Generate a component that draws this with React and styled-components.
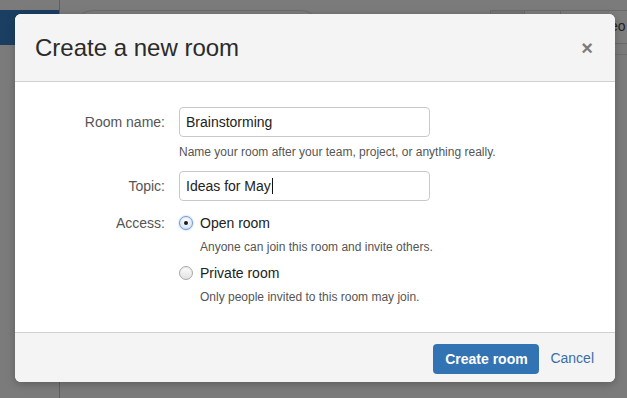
import React from "react";
import styled, { createGlobalStyle } from "styled-components";

const Global = createGlobalStyle`
  html, body { margin: 0; padding: 0; }
  body {
    width: 627px;
    height: 398px;
    overflow: hidden;
    background: #7b7b7b;
    font-family: "Liberation Sans", Arial, sans-serif;
  }
`;

const Page = styled.div`
  position: relative;
  display: flex;
  width: 627px;
  height: 398px;
  background: #7b7b7b;
`;

const Sidebar = styled.div`
  width: 59px;
  border-right: 1px solid #5f5f5f;
  padding-top: 10px;
`;

const BlueTab = styled.div`
  height: 35px;
  background: #1b3f62;
`;

const Main = styled.div`
  flex: 1;
  display: flex;
  flex-direction: column;
`;

const Toolbar = styled.div`
  display: flex;
  align-items: flex-start;
  padding: 10px 0 0 16px;
  height: 44px;
  border-bottom: 1px solid #6e6e6e;
`;

const Search = styled.div`
  width: 240px;
  height: 30px;
  border: 1px solid #6c6c6c;
  border-radius: 16px;
  background: #7d7d7d;
`;

const ToolGroup = styled.div`
  display: flex;
  margin-left: auto;
`;

const ToolBtn = styled.div`
  width: ${p => p.w}px;
  height: 34px;
  border: 1px solid #6a6a6a;
  border-right: none;
  background: ${p => (p.dark ? "#747474" : "#7d7d7d")};
  font-size: 14px;
  color: #222;
  line-height: 30px;
  padding-left: ${p => p.pad || 0}px;
  box-sizing: border-box;
  overflow: hidden;
  white-space: nowrap;
`;

const Overlay = styled.div`
  position: absolute;
  inset: 0;
  padding: 14px 0 0 15px;
`;

const Modal = styled.div`
  width: 600px;
  border-radius: 6px;
  overflow: hidden;
  background: #fff;
  box-shadow: 0 2px 8px rgba(0, 0, 0, 0.25);
`;

const Header = styled.div`
  display: flex;
  align-items: center;
  justify-content: space-between;
  height: 67px;
  padding: 0 22px 0 20px;
  background: #f4f4f4;
  border-bottom: 1px solid #d0d0d0;
`;

const Title = styled.h3`
  margin: 0;
  font-size: 24px;
  font-weight: normal;
  color: #2b2b2b;
  padding-top: 1px;
`;

const Close = styled.span`
  font-size: 20px;
  font-weight: bold;
  color: #7c7c7c;
  line-height: 1;
  margin-top: 1px;
`;

const Body = styled.div`
  display: grid;
  grid-template-columns: 150px 1fr;
  column-gap: 14px;
  padding: 25px 0 27px;
`;

const Label = styled.div`
  text-align: right;
  font-size: 14px;
  color: #555;
  line-height: ${p => p.lh || 30}px;
  margin-top: ${p => p.mt || 0}px;
`;

const Field = styled.div`
  margin-top: ${p => p.mt || 0}px;
`;

const Input = styled.div`
  width: 251px;
  height: 30px;
  box-sizing: border-box;
  border: 1px solid #c9c9c9;
  border-radius: 4px;
  padding: 0 6px;
  font-size: 14px;
  line-height: 28px;
  color: #222;
  display: flex;
  align-items: center;
`;

const Caret = styled.span`
  display: inline-block;
  width: 1px;
  height: 16px;
  background: #111;
  margin-left: 1px;
`;

const Help = styled.div`
  font-size: 12px;
  color: #555;
  line-height: 16px;
  margin-top: ${p => p.mt || 0}px;
  padding-left: ${p => p.indent || 0}px;
`;

const Option = styled.div`
  display: flex;
  align-items: center;
  height: 20px;
  margin-top: ${p => p.mt || 0}px;
  font-size: 14px;
  color: #222;
`;

const Radio = styled.span`
  box-sizing: border-box;
  width: 14px;
  height: 14px;
  border-radius: 50%;
  margin-right: 7px;
  display: inline-flex;
  align-items: center;
  justify-content: center;
  border: 1px solid ${p => (p.checked ? "#6f9bd0" : "#a9a9a9")};
  background: ${p =>
    p.checked
      ? "radial-gradient(circle at 50% 35%, #fff 0%, #dfeaf7 60%, #b9cfea 100%)"
      : "linear-gradient(#fdfdfd, #e2e2e2)"};
  box-shadow: ${p => (p.checked ? "0 0 2px #8fb3e0" : "inset 0 1px 1px rgba(0,0,0,0.08)")};
  &::after {
    content: "";
    display: ${p => (p.checked ? "block" : "none")};
    width: 4px;
    height: 4px;
    border-radius: 50%;
    background: #1c1c1c;
  }
`;

const Footer = styled.div`
  display: flex;
  align-items: center;
  justify-content: flex-end;
  gap: 11px;
  height: 49px;
  padding: 0 21px 0 0;
  background: #f4f4f4;
  border-top: 1px solid #d0d0d0;
`;

const Primary = styled.button`
  height: 30px;
  width: 106px;
  border: none;
  border-radius: 4px;
  background: #3273b4;
  color: #fff;
  font-family: "Liberation Sans", Arial, sans-serif;
  font-size: 14px;
  font-weight: bold;
  padding: 0;
  margin-top: 2px;
`;

const LinkBtn = styled.a`
  font-size: 14px;
  color: #3a6ea8;
  margin-top: 1px;
`;

export default function App() {
  return (
    <>
      <Global />
      <Page>
        <Sidebar>
          <BlueTab />
        </Sidebar>
        <Main>
          <Toolbar>
            <Search />
            <ToolGroup>
              <ToolBtn w={34} dark />
              <ToolBtn w={36} />
              <ToolBtn w={67} pad={29}>Video</ToolBtn>
            </ToolGroup>
          </Toolbar>
        </Main>
        <Overlay>
          <Modal>
            <Header>
              <Title>Create a new room</Title>
              <Close>×</Close>
            </Header>
            <Body>
              <Label>Room name:</Label>
              <Field>
                <Input>Brainstorming</Input>
                <Help mt={7}>Name your room after your team, project, or anything really.</Help>
              </Field>
              <Label mt={11}>Topic:</Label>
              <Field mt={11}>
                <Input>
                  Ideas for May<Caret />
                </Input>
              </Field>
              <Label mt={12} lh={20}>Access:</Label>
              <Field mt={12}>
                <Option>
                  <Radio checked />
                  Open room
                </Option>
                <Help mt={6} indent={21}>Anyone can join this room and invite others.</Help>
                <Option mt={8}>
                  <Radio />
                  Private room
                </Option>
                <Help mt={6} indent={21}>Only people invited to this room may join.</Help>
              </Field>
            </Body>
            <Footer>
              <Primary>Create room</Primary>
              <LinkBtn>Cancel</LinkBtn>
            </Footer>
          </Modal>
        </Overlay>
      </Page>
    </>
  );
}
